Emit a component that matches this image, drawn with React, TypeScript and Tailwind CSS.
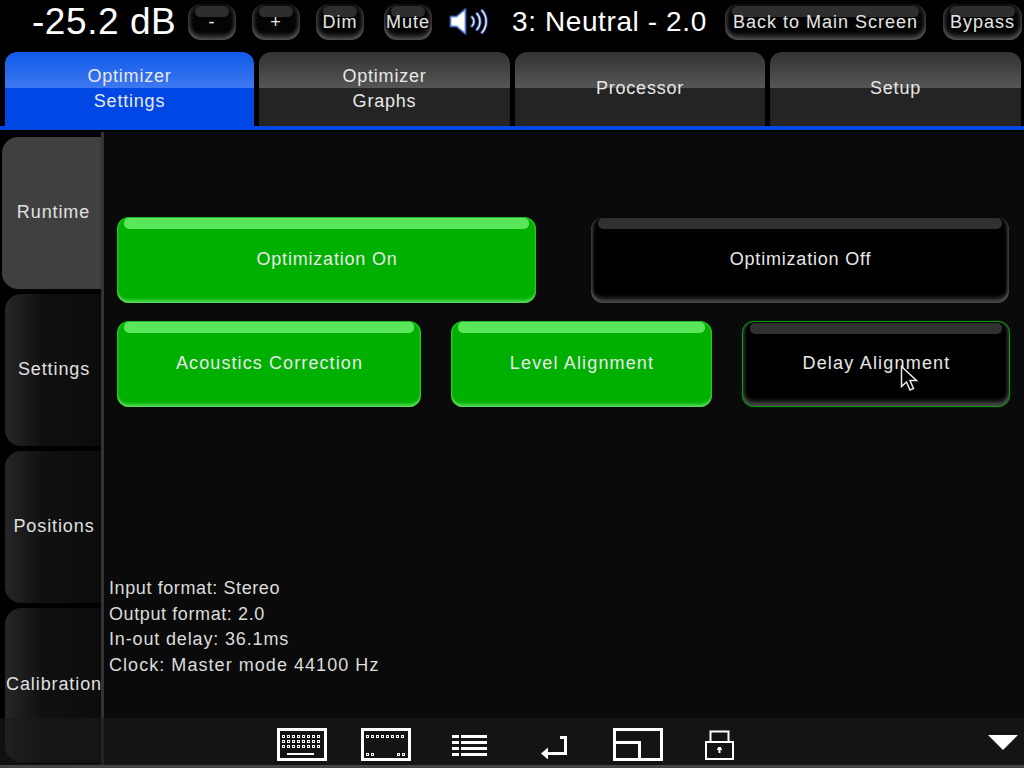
import type { ReactNode } from "react";

const glossy =
  "shadow-[inset_0_-6px_5px_-2px_rgba(105,105,105,0.7),inset_4px_0_4px_-2px_rgba(85,85,85,0.7),inset_-4px_0_4px_-2px_rgba(85,85,85,0.7)]";

function TopButton({ label, className, bar = true }: { label: string; className: string; bar?: boolean }) {
  return (
    <button className={`relative flex h-[36px] items-center justify-center rounded-[13px] bg-[#040404] tracking-[1px] text-[#e4e4e4] ${glossy} ${className}`}>
      {bar && <span className="absolute left-[7px] right-[7px] top-[2px] h-[11px] rounded-[6px] bg-[#2e2e2e]" />}
      <span className="relative">{label}</span>
    </button>
  );
}

function Tab({ lines, active, className }: { lines: string[]; active?: boolean; className: string }) {
  return (
    <div
      className={`flex h-[74px] flex-col items-center justify-center rounded-t-[12px] text-[18px] leading-[25.5px] tracking-[0.8px] text-[#e8e8e8] ${className} ${
        active
          ? "bg-[linear-gradient(to_bottom,#0f5ae8_0%,#3d78f0_48%,#0048e6_48%,#0048e6_100%)]"
          : "bg-[linear-gradient(to_bottom,#333333_0%,#555555_48%,#242424_48%,#242424_100%)]"
      }`}
    >
      {lines.map((l) => (
        <span key={l}>{l}</span>
      ))}
    </div>
  );
}

function SideTab({ label, active, className }: { label: string; active?: boolean; className: string }) {
  return (
    <div
      className={`flex items-center justify-center rounded-l-[16px] pb-[2px] text-[18px] tracking-[0.9px] text-[#e0e0e0] whitespace-nowrap ${className} ${
        active ? "bg-[#404040] pl-[4px]" : "bg-[linear-gradient(to_right,#262626,#101010_40%,#0c0c0c)] pl-[2px]"
      }`}
    >
      {label}
    </div>
  );
}

function ActionButton({
  label,
  tone,
  className,
}: {
  label: string;
  tone: "green" | "dark" | "darkGreen";
  className: string;
}) {
  const look =
    tone === "green"
      ? "bg-[#00b000] shadow-[inset_0_-4px_3px_-1px_rgba(100,225,100,0.75),inset_0_0_3px_rgba(100,225,100,0.9)]"
      : tone === "dark"
        ? "bg-black shadow-[inset_0_-7px_5px_-3px_rgba(110,110,110,0.7),inset_4px_0_3px_-2px_rgba(90,90,90,0.7),inset_-4px_0_3px_-2px_rgba(90,90,90,0.7)]"
        : "bg-black border border-[#0c9c0c] shadow-[0_0_1px_#0c9c0c,inset_0_-7px_5px_-3px_rgba(110,110,110,0.7),inset_4px_0_3px_-2px_rgba(70,70,70,0.6),inset_-4px_0_3px_-2px_rgba(70,70,70,0.6)]";
  return (
    <button className={`relative flex items-center justify-center rounded-[12px] pb-[2px] pl-[1px] text-[18px] text-[#e8e8e8] ${look} ${className}`}>
      <span
        className={`absolute left-[7px] right-[7px] top-[1px] h-[11px] rounded-[5px] ${
          tone === "green" ? "bg-[#5ae65a]" : "bg-[#303030]"
        }`}
      />
      <span className="relative">{label}</span>
    </button>
  );
}

function Icon({ w, h, children, className = "" }: { w: number; h: number; children: ReactNode; className?: string }) {
  return (
    <svg width={w} height={h} viewBox={`0 0 ${w} ${h}`} className={`shrink-0 ${className}`} fill="none">
      {children}
    </svg>
  );
}

function Keys({ xs, ys }: { xs: number[]; ys: number[] }) {
  return (
    <>
      {ys.flatMap((y) =>
        xs.map((x) => <rect key={`${x}-${y}`} x={x + 0.5} y={y + 0.5} width={2} height={2} stroke="white" />)
      )}
    </>
  );
}

function SpeakerIcon() {
  const arcs = "M23 9c2.500 2.500 2.500 6.500 0 9M28 5.500c4 4.500 4 11.500 0 16M33 2.500c5.500 6 5.500 16 0 22";
  return (
    <svg width="40" height="27" viewBox="0 0 40 27" fill="none" className="shrink-0">
      <path d="M1.500 8.500h6l9-7.500v25l-9-7.500h-6z" fill="white" stroke="#3f6fd8" strokeOpacity="0.7" strokeWidth="2" strokeLinejoin="round" />
      <path d={arcs} stroke="#3f6fd8" strokeOpacity="0.6" strokeWidth="3.500" strokeLinecap="round" />
      <path d={arcs} stroke="#dfe8ff" strokeWidth="1.600" strokeLinecap="round" />
    </svg>
  );
}

export default function App() {
  return (
    <div
      className="relative flex h-[768px] w-[1024px] flex-col overflow-hidden bg-black"
      style={{ fontFamily: '"Liberation Sans", Arial, sans-serif' }}
    >
      {/* top status bar */}
      <div className="flex h-[52px] shrink-0 items-start pt-[4px] text-[18px]">
        <span className="ml-[32px] w-[156px] text-[37px] leading-[36px] tracking-[0.55px] text-white">-25.2 dB</span>
        <TopButton label="-" className="w-[48px]" />
        <TopButton label="+" className="ml-[16px] w-[48px]" />
        <TopButton label="Dim" className="ml-[16px] w-[48px]" />
        <TopButton label="Mute" className="ml-[20px] w-[48px]" />
        <span className="ml-[17px] mt-[4px]">
          <SpeakerIcon />
        </span>
        <span className="ml-[23px] w-[213px] text-[28px] leading-[36px] tracking-[0.6px] text-white">3: Neutral - 2.0</span>
        <TopButton label="Back to Main Screen" className="w-[201px] tracking-[1.1px]" />
        <TopButton label="Bypass" className="ml-[17px] w-[79px]" />
      </div>

      {/* main tabs */}
      <div className="flex shrink-0 gap-[5px] pl-[5px]">
        <Tab lines={["Optimizer", "Settings"]} active className="w-[249px]" />
        <Tab lines={["Optimizer", "Graphs"]} className="w-[251px]" />
        <Tab lines={["Processor"]} className="w-[250px]" />
        <Tab lines={["Setup"]} className="w-[251px]" />
      </div>
      <div className="h-[4px] shrink-0 bg-[#0048e6]" />

      {/* body */}
      <div className="flex min-h-0 flex-1 pt-[2px]">
        <div className="flex w-[101px] shrink-0 flex-col items-end gap-[5px] pt-[5px]">
          <SideTab label="Runtime" active className="h-[152px] w-[99px]" />
          <SideTab label="Settings" className="h-[152px] w-[96px]" />
          <SideTab label="Positions" className="h-[152px] w-[96px]" />
          <SideTab label="Calibration" className="h-[154px] w-[96px]" />
        </div>
        <div className="h-[634px] w-[3px] shrink-0 bg-[#333333]" />
        <div className="flex-1 bg-[#0a0a0a] pl-[13px] pr-[14px] pt-[85px]">
          <div className="flex gap-[55px]">
            <ActionButton label="Optimization On" tone="green" className="h-[86px] w-[419px] tracking-[0.8px]" />
            <ActionButton label="Optimization Off" tone="dark" className="h-[86px] w-[418px] tracking-[0.8px]" />
          </div>
          <div className="mt-[18px] flex gap-[30px]">
            <ActionButton label="Acoustics Correction" tone="green" className="h-[86px] w-[304px] tracking-[1.1px]" />
            <ActionButton label="Level Alignment" tone="green" className="h-[86px] w-[261px] tracking-[1.15px]" />
            <ActionButton label="Delay Alignment" tone="darkGreen" className="h-[86px] w-[268px] tracking-[1.2px]" />
          </div>
          <div className="-ml-[8px] mt-[169px] text-[18px] leading-[25.6px] text-[#dcdcdc]">
            <p className="tracking-[0.6px]">Input format: Stereo</p>
            <p className="tracking-[0.6px]">Output format: 2.0</p>
            <p className="tracking-[0.85px]">In-out delay: 36.1ms</p>
            <p className="tracking-[1.05px]">Clock: Master mode 44100 Hz</p>
          </div>
        </div>
      </div>

      {/* mouse pointer */}
      <svg width="20" height="28" viewBox="0 0 20 28" className="absolute left-[899px] top-[365px]" fill="black">
        <path d="M2.500 1.500v20l5-4.500 3.500 8 3.500-1.500-3.500-8h6.500z" stroke="#e8e8e8" strokeWidth="1.500" />
      </svg>

      {/* bottom toolbar, floats over the page */}
      <div className="absolute bottom-0 left-0 right-0 h-[50px] border-b-[3px] border-[#444444] bg-[#1a1a1a]/60">
        <div className="flex h-[47px] items-start pl-[277px] pt-[10px]">
          <Icon w={50} h={33}>
            <rect x="1.500" y="1.500" width="47" height="30" stroke="white" strokeWidth="3" />
            <Keys xs={[5, 10, 15, 20, 25, 30, 35, 40]} ys={[7, 12, 17]} />
            <rect x="10" y="25" width="27" height="2" fill="white" />
          </Icon>
          <Icon w={50} h={33} className="ml-[34px]">
            <rect x="1.500" y="1.500" width="47" height="30" stroke="white" strokeWidth="3" />
            <Keys xs={[5, 10, 15, 20, 25, 30, 35, 40]} ys={[7]} />
            <Keys xs={[5, 10, 36, 41]} ys={[25]} />
          </Icon>
          <Icon w={35} h={22} className="ml-[41px] mt-[7px]">
            {[0, 6, 12, 18].map((y) => (
              <g key={y} fill="white">
                <rect x="0" y={y} width="7" height="3" />
                <rect x="9" y={y} width="26" height="3" />
              </g>
            ))}
          </Icon>
          <Icon w={26} h={23} className="ml-[54px] mt-[8px]">
            <path d="M19 1.500h5.500v16H5" stroke="white" strokeWidth="3" />
            <path d="M0 17.500l7-6v12z" fill="white" />
          </Icon>
          <Icon w={50} h={33} className="ml-[46px]">
            <rect x="1.500" y="1.500" width="47" height="30" stroke="white" strokeWidth="3" />
            <path d="M1.500 14.500h25v17" stroke="white" strokeWidth="3" />
          </Icon>
          <Icon w={29} h={30} className="ml-[42px] mt-[2px]">
            <path d="M5.500 12V1.500h18V12" stroke="white" strokeWidth="2" />
            <rect x="1" y="12" width="27" height="17" stroke="white" strokeWidth="2" />
            <path d="M13 17h3v1.500h1V20h-1.500v3h-2v-3H12v-1.500h1z" fill="white" />
          </Icon>
          <div className="ml-auto mr-[6px] mt-[7px] h-[15px] w-[30px] bg-white [clip-path:polygon(0_0,100%_0,50%_100%)]" />
        </div>
      </div>
    </div>
  );
}
